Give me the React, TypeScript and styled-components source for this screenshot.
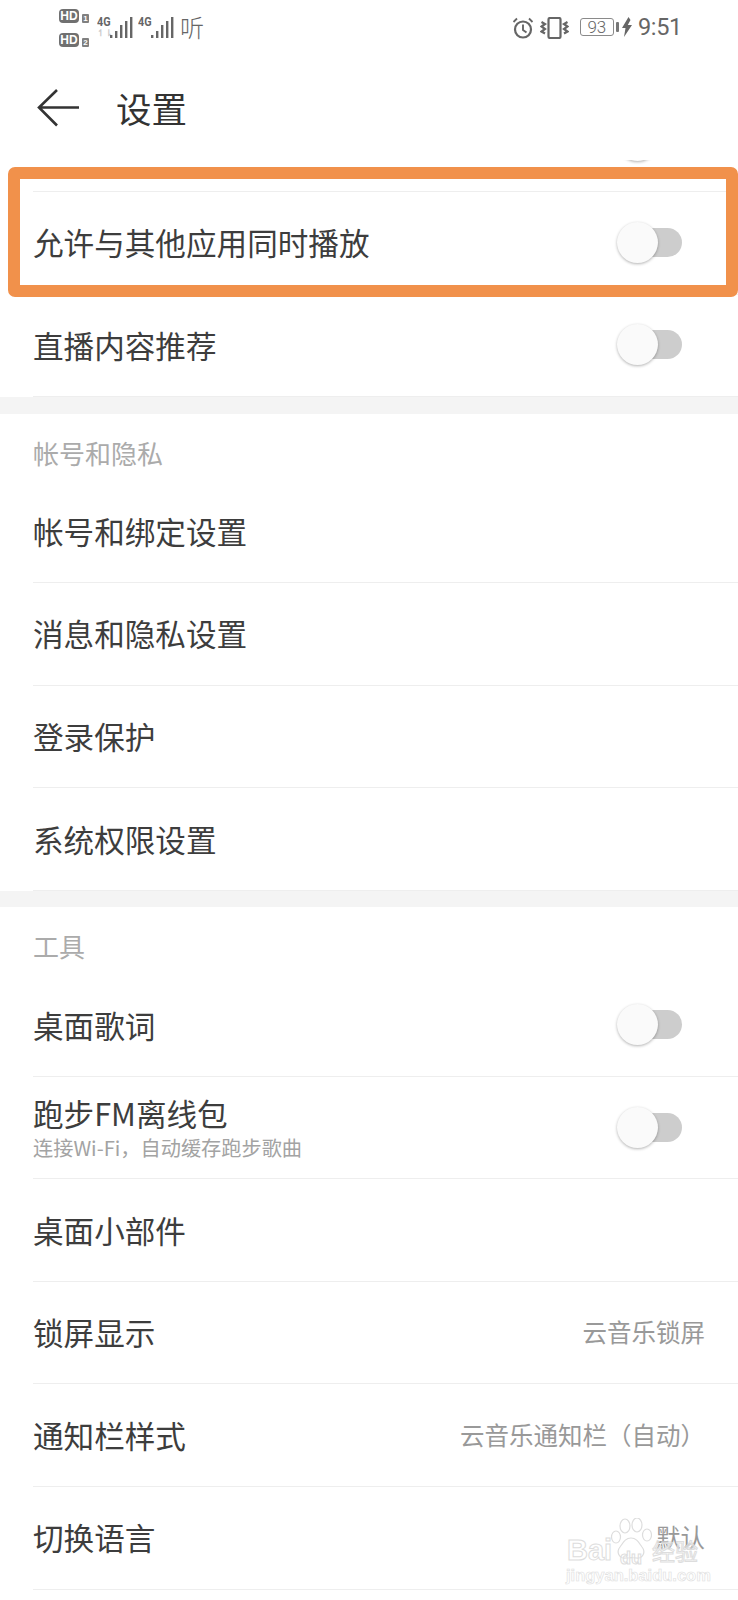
import styled, { createGlobalStyle } from "styled-components";

const GlobalStyle = createGlobalStyle`
    html, body {
        margin: 0;
        padding: 0;
        background: #fff;
    }
    * {
        box-sizing: border-box;
    }
`

const Page = styled.div`
    position: relative;
    width: 738px;
    height: 1600px;
    overflow: hidden;
    background: #fff;
    font-family: "Noto Sans CJK SC", "Noto Sans", sans-serif;
    color: #3a3a3a;
`

/* status bar */
const StatusBar = styled.div`
    display: flex;
    justify-content: space-between;
    height: 60px;
    padding: 9px 56px 0 59px;
    color: #666;
`
const StatusLeft = styled.div`
    display: flex;
    align-items: flex-start;
`
const SimStack = styled.div`
    display: flex;
    flex-direction: column;
    gap: 10px;
    width: 38px;
`
const SimRow = styled.div`
    display: flex;
    align-items: flex-end;
    gap: 3px;
    height: 14px;
`
const HdBadge = styled.span`
    width: 20px;
    height: 14px;
    border-radius: 4px;
    background: #707070;
    color: #fff;
    font: bold 12px/14px "Liberation Sans", sans-serif;
    text-align: center;
`
const SimNumber = styled.span`
    width: 7px;
    height: 9px;
    border-radius: 1px;
    background: #808080;
    color: #fff;
    font: bold 8px/9px "Liberation Sans", sans-serif;
    text-align: center;
`
const NetworkGroup = styled.div`
    display: flex;
    align-items: flex-start;
    margin-right: 5px;
    padding-top: 8px;
`
const NetworkLabels = styled.div`
    display: flex;
    flex-direction: column;
    width: 12px;
`
const FourG = styled.span`
    font: bold 12px/11px "Roboto", sans-serif;
    transform: scaleX(0.9);
    transform-origin: left;
    color: #666;
`
const DataArrows = styled.span<{ $hidden?: boolean }>`
    height: 9px;
    margin-top: 1px;
    font: bold 9px/9px "Liberation Sans", sans-serif;
    color: #ccc;
    visibility: ${p => (p.$hidden ? "hidden" : "visible")};
`
const ListenGlyph = styled.span`
    margin: 6px 0 0 1px;
    font: 300 24px/24px "Noto Sans CJK SC", sans-serif;
    color: #666;
`
const StatusRight = styled.div`
    display: flex;
    align-items: flex-start;
    padding-top: 8px;
`
const Battery = styled.div`
    width: 34px;
    height: 18px;
    margin: 1px 0 0 11px;
    border: 1px solid #8a8a8a;
    border-radius: 3px;
    font: 300 17px/16px "Roboto", sans-serif;
    text-align: center;
    color: #666;
`
const BatteryTip = styled.div`
    width: 3px;
    height: 10px;
    margin: 5px 0 0 2px;
    background: #777;
    border-radius: 1px;
`
const Clock = styled.span`
    margin: -4px 0 0 6px;
    font: 23.5px/28px "Roboto", sans-serif;
    letter-spacing: -0.3px;
    color: #666;
`

/* header */
const Header = styled.header`
    display: flex;
    align-items: center;
    height: 100px;
    padding: 0 0 4px 37px;
`
const BackIcon = styled.svg`
    display: block;
    width: 42px;
    height: 38px;
`
const Title = styled.h1`
    margin: 0 0 0 37px;
    font-size: 35.5px;
    font-weight: 400;
    line-height: 44px;
    color: #333;
`

/* list */
const Row = styled.div`
    position: relative;
    display: flex;
    align-items: center;
    justify-content: space-between;
    height: 102.55px;
    margin-left: 33px;
    padding: 0 33px 1px 0;
    border-bottom: 1px solid #eeeeee;
`
const ClippedRow = styled(Row)`
    align-items: flex-start;
    justify-content: flex-end;
    height: 32px;
    overflow: hidden;
    padding: 0 80px 0 0;
`
const RowLabel = styled.div`
    font-size: 30.6px;
    line-height: 40px;
    color: #3d3d3d;
`
const RowStack = styled.div`
    display: flex;
    flex-direction: column;
`
const RowHint = styled.div`
    margin-top: 2px;
    font-size: 20.2px;
    line-height: 26px;
    color: #a3a3a3;
`
const RowValue = styled.div`
    font-size: 24.5px;
    line-height: 32px;
    color: #999;
`
const Track = styled.div`
    position: relative;
    width: 60px;
    height: 29px;
    margin-right: 23px;
    border-radius: 15px;
    background: #cdcdcd;
`
const Thumb = styled.div`
    position: absolute;
    left: -5px;
    top: -6px;
    width: 41px;
    height: 41px;
    border-radius: 50%;
    background: #fafafa;
    box-shadow: 0 1px 3px rgba(0, 0, 0, 0.3);
`
const ThumbSliver = styled(Thumb)`
    position: relative;
    left: 0;
    top: -40px;
`
const Highlight = styled.div`
    position: absolute;
    top: -25px;
    left: -25px;
    right: 0;
    bottom: -3px;
    border: 12px solid #f1914b;
    border-radius: 7px;
    pointer-events: none;
`
const SectionGap = styled.div`
    height: 16.5px;
    background: #f4f4f4;
`
const SectionTitle = styled.div`
    height: 67px;
    padding: 22px 0 0 33px;
    font-size: 26px;
    line-height: 34px;
    color: #ababab;
`

/* baidu watermark */
const Watermark = styled.div`
    position: absolute;
    left: 566px;
    top: 1518px;
    width: 134px;
    height: 66px;
    color: #fff;
    opacity: 0.95;
`
const Paw = styled.svg`
    position: absolute;
    left: 44px;
    top: 0;
    width: 42px;
    height: 46px;
`
const MarkText = styled.span<{ $left: number }>`
    position: absolute;
    left: ${p => p.$left}px;
    top: 17px;
    font: bold 29px/30px "Liberation Sans", sans-serif;
    color: rgba(255, 255, 255, 0.4);
    -webkit-text-stroke: 1px #dcdcdc;
`
const MarkSmall = styled(MarkText)`
    top: 25px;
    font-size: 18px;
`
const MarkCjk = styled(MarkText)`
    font: 400 23px/30px "Noto Sans CJK SC", sans-serif;
`
const MarkUrl = styled.span`
    position: absolute;
    left: 0;
    top: 47px;
    font: bold 16.5px/20px "Liberation Sans", sans-serif;
    color: rgba(255, 255, 255, 0.4);
    -webkit-text-stroke: 0.6px #dcdcdc;
`

function Signal() {
    return (
        <svg width="24" height="22" viewBox="0 0 24 22" fill="#666">
            <rect x="1" y="18" width="2.4" height="3" />
            <rect x="6" y="14" width="2.4" height="7" />
            <rect x="11" y="8" width="2.4" height="13" />
            <rect x="16" y="4" width="2.4" height="17" />
            <rect x="21" y="0" width="2.4" height="21" />
        </svg>
    )
}

function AlarmIcon() {
    return (
        <svg width="22" height="22" viewBox="0 0 22 22" fill="none" stroke="#666" strokeWidth="2.2">
            <circle cx="11" cy="12.5" r="8" />
            <path d="M11 7.5v5.5l3.5 2.5" strokeWidth="1.9" />
            <path d="M1.5 5 5 1.5M20.5 5 17 1.5" strokeWidth="1.8" />
        </svg>
    )
}

function VibrateIcon() {
    return (
        <svg width="29" height="22" viewBox="0 0 29 22" fill="none" stroke="#666" strokeWidth="2.2" style={{ marginLeft: 6 }}>
            <rect x="8.5" y="1" width="12" height="20" rx="1.5" />
            <path d="M1.500 5l3.500 2-3.500 2.500 3.500 2.500-3.500 2.500 3.500 2" />
            <path d="M27.500 5l-3.500 2 3.500 2.500-3.500 2.500 3.500 2.500-3.500 2" />
        </svg>
    )
}

function BoltIcon() {
    return (
        <svg width="10" height="20" viewBox="0 0 10 20" fill="#666" style={{ marginLeft: 3 }}>
            <path d="M6.500 0 0 11h3.500L2 20l8-12H5.800L8.500 3z" />
        </svg>
    )
}

function Toggle() {
    return (
        <Track>
            <Thumb />
        </Track>
    )
}

function Network({ arrows }: { arrows?: boolean }) {
    return (
        <NetworkGroup>
            <NetworkLabels>
                <FourG>4G</FourG>
                <DataArrows $hidden={!arrows}>↿⇂</DataArrows>
            </NetworkLabels>
            <Signal />
        </NetworkGroup>
    )
}

const accountRows = ["帐号和绑定设置", "消息和隐私设置", "登录保护", "系统权限设置"]

export default function App() {
    return (
        <Page>
            <GlobalStyle />
            <StatusBar>
                <StatusLeft>
                    <SimStack>
                        <SimRow><HdBadge>HD</HdBadge><SimNumber>1</SimNumber></SimRow>
                        <SimRow><HdBadge>HD</HdBadge><SimNumber>2</SimNumber></SimRow>
                    </SimStack>
                    <Network arrows />
                    <Network />
                    <ListenGlyph>听</ListenGlyph>
                </StatusLeft>
                <StatusRight>
                    <AlarmIcon />
                    <VibrateIcon />
                    <Battery>93</Battery>
                    <BatteryTip />
                    <BoltIcon />
                    <Clock>9:51</Clock>
                </StatusRight>
            </StatusBar>
            <Header>
                <BackIcon viewBox="0 0 42 38" fill="none" stroke="#333" strokeWidth="2.6">
                    <path d="M42 18.500H2M20 1 2 18.500 20 36.500" />
                </BackIcon>
                <Title>设置</Title>
            </Header>

            <ClippedRow>
                <ThumbSliver />
            </ClippedRow>
            <Row>
                <RowLabel>允许与其他应用同时播放</RowLabel>
                <Toggle />
                <Highlight />
            </Row>
            <Row>
                <RowLabel>直播内容推荐</RowLabel>
                <Toggle />
            </Row>
            <SectionGap />

            <SectionTitle>帐号和隐私</SectionTitle>
            {accountRows.map(label => (
                <Row key={label}>
                    <RowLabel>{label}</RowLabel>
                </Row>
            ))}
            <SectionGap />

            <SectionTitle>工具</SectionTitle>
            <Row>
                <RowLabel>桌面歌词</RowLabel>
                <Toggle />
            </Row>
            <Row>
                <RowStack>
                    <RowLabel>跑步FM离线包</RowLabel>
                    <RowHint>连接Wi-Fi，自动缓存跑步歌曲</RowHint>
                </RowStack>
                <Toggle />
            </Row>
            <Row>
                <RowLabel>桌面小部件</RowLabel>
            </Row>
            <Row>
                <RowLabel>锁屏显示</RowLabel>
                <RowValue>云音乐锁屏</RowValue>
            </Row>
            <Row>
                <RowLabel>通知栏样式</RowLabel>
                <RowValue>云音乐通知栏（自动）</RowValue>
            </Row>
            <Row>
                <RowLabel>切换语言</RowLabel>
                <RowValue>默认</RowValue>
            </Row>

            <Watermark>
                <Paw viewBox="0 0 42 46" fill="#fff" stroke="#dcdcdc" strokeWidth="1.2">
                    <ellipse cx="6" cy="19" rx="4.500" ry="6" />
                    <ellipse cx="15" cy="8" rx="5" ry="7" />
                    <ellipse cx="27" cy="7" rx="5" ry="7" />
                    <ellipse cx="37" cy="17" rx="4.500" ry="6" />
                    <path d="M21 20c-6 0-8 5-11 9-4 5-1 12 6 11 3 0 7-1 10 0 7 1 10-6 6-11-3-4-5-9-11-9z" />
                </Paw>
                <MarkText $left={1}>Bai</MarkText>
                <MarkSmall $left={54}>du</MarkSmall>
                <MarkCjk $left={86}>经验</MarkCjk>
                <MarkUrl>jingyan.baidu.com</MarkUrl>
            </Watermark>
        </Page>
    )
}
